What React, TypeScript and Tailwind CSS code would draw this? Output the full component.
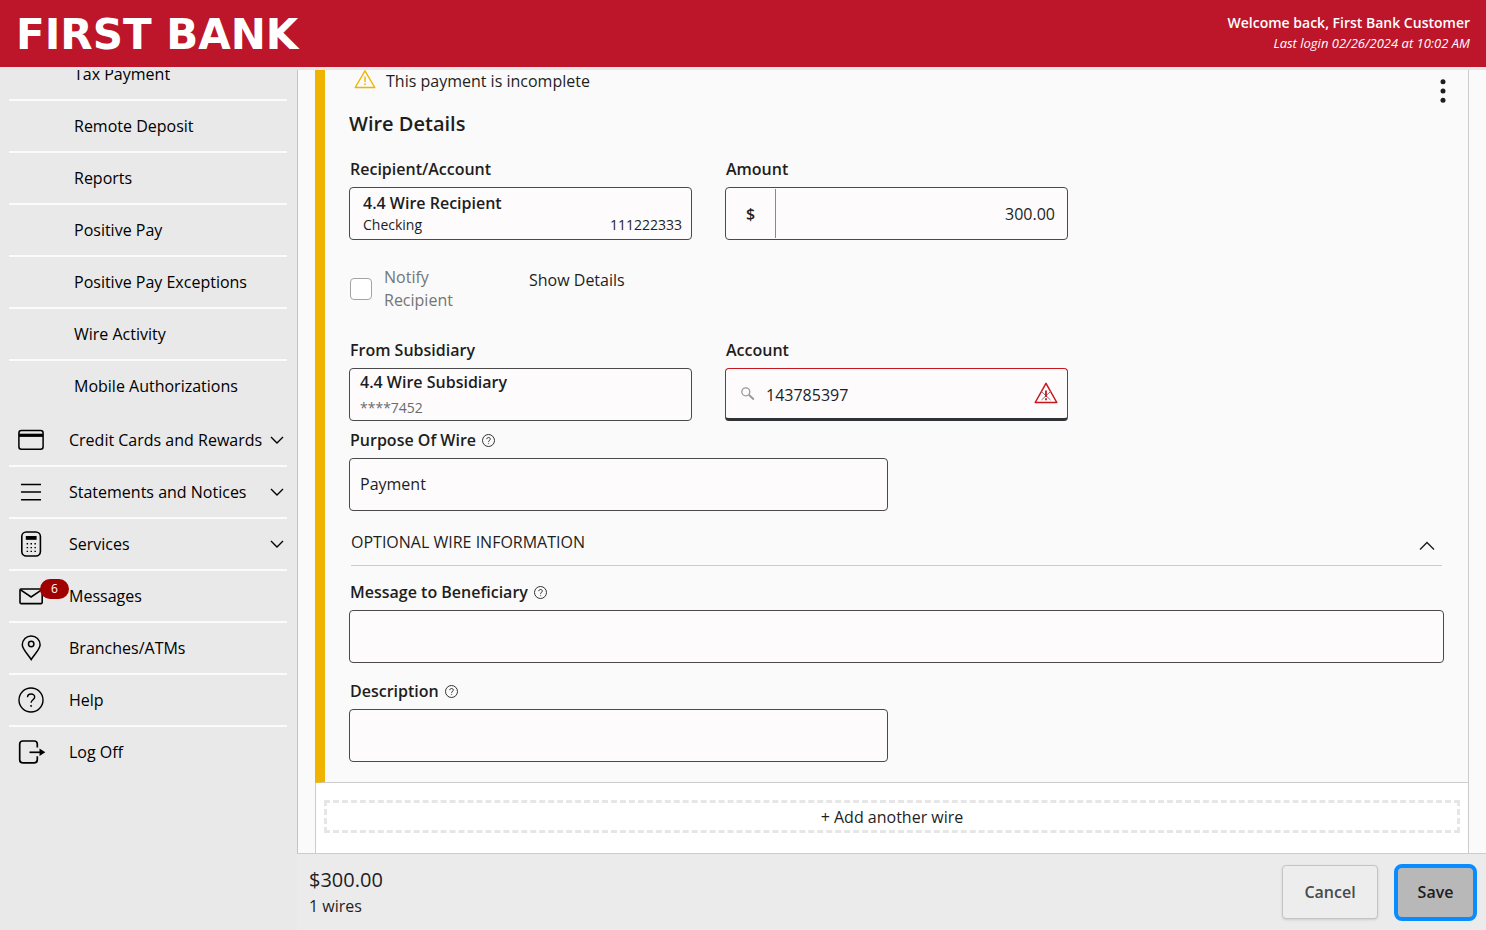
import React, { useState } from 'react';

const subItems = [
  'Tax Payment',
  'Remote Deposit',
  'Reports',
  'Positive Pay',
  'Positive Pay Exceptions',
  'Wire Activity',
  'Mobile Authorizations'
];

const CardIcon = () => (
  <svg width="26" height="26" viewBox="0 0 26 26" fill="none" stroke="currentColor" strokeWidth="1.5">
    <rect x="0.9" y="3.6" width="24.2" height="18.6" rx="2.5" />
    <path d="M1 8.3h24" strokeWidth="3.2" />
  </svg>
);

const LinesIcon = () => (
  <svg width="26" height="26" viewBox="0 0 26 26" fill="none" stroke="currentColor" strokeWidth="1.6">
    <path d="M3 5.5h20M3 13h20M3 20.7h20" />
  </svg>
);

const CalculatorIcon = () => (
  <svg width="26" height="26" viewBox="0 0 26 26" fill="none" stroke="currentColor" strokeWidth="1.6">
    <rect x="3.8" y="1" width="18.6" height="24" rx="4.5" />
    <rect x="7.8" y="5" width="10.8" height="3.8" fill="currentColor" stroke="none" />
    <path d="M8.6 12.8h10M8.6 16.6h10M8.6 20.4h10" strokeDasharray="1.5 2.4" strokeWidth="1.4" />
  </svg>
);

const MailIcon = () => (
  <svg width="26" height="26" viewBox="0 0 26 26" fill="none" stroke="currentColor" strokeWidth="1.6">
    <rect x="2" y="6" width="22.2" height="14.6" rx="1" />
    <path d="M2.6 6.8l10.500 7.200 10.500-7.200" />
  </svg>
);

const PinIcon = () => (
  <svg width="26" height="26" viewBox="0 0 26 26" fill="none" stroke="currentColor" strokeWidth="1.5">
    <path d="M13.2 24.5C10 19.5 4.3 14.2 4.3 9.8a8.9 8.9 0 0 1 17.8 0c0 4.4-5.7 9.7-8.9 14.7z" />
    <circle cx="13.2" cy="9" r="2.7" />
  </svg>
);

const HelpIcon = ({ size = 26 }: { size?: number }) => (
  <svg width={size} height={size} viewBox="0 0 26 26" fill="none" stroke="currentColor" strokeWidth={size < 20 ? 1.8 : 1.4}>
    <circle cx="13" cy="13" r="12" />
    <path d="M9.5 10.3c0-4.4 7.2-4.4 7.2-.3 0 2.7-3.6 2.8-3.6 5.8" />
    <circle cx="13.1" cy="18.9" r="0.6" fill="currentColor" strokeWidth="0.8" />
  </svg>
);

const LogOffIcon = () => (
  <svg width="28" height="26" viewBox="0 0 28 26" fill="none" stroke="currentColor" strokeWidth="1.7">
    <path d="M19.3 8.5V5a3 3 0 0 0-3-3H4.7a3 3 0 0 0-3 3v15.8a3 3 0 0 0 3 3h11.6a3 3 0 0 0 3-3v-3.5" />
    <path d="M11.5 13.3h11" />
    <path d="M21.5 9.5l5.8 3.8-5.800 3.800z" fill="currentColor" stroke="none" />
  </svg>
);

const Chevron = ({ up = false }: { up?: boolean }) => (
  <svg width="16" height="10" viewBox="0 0 16 10" fill="none" stroke="currentColor" strokeWidth="1.4">
    <path d={up ? 'M1 8.5l7-7 7 7' : 'M2 2l6 6 6-6'} />
  </svg>
);

const mainItems = [
  { label: 'Credit Cards and Rewards', icon: <CardIcon />, expandable: true },
  { label: 'Statements and Notices', icon: <LinesIcon />, expandable: true },
  { label: 'Services', icon: <CalculatorIcon />, expandable: true },
  { label: 'Messages', icon: <MailIcon />, badge: 6 },
  { label: 'Branches/ATMs', icon: <PinIcon /> },
  { label: 'Help', icon: <HelpIcon /> },
  { label: 'Log Off', icon: <LogOffIcon /> }
];

const Sidebar = () => (
  <nav className="w-[298px] shrink-0 overflow-hidden border-r border-[#c4c4c4] bg-[#e9e9e9] pl-[9px] pr-2.5 text-base text-black">
    <ul className="-mt-[21px]">
      {subItems.map((item, index) => (
        <li key={item} className={index < subItems.length - 1 ? 'border-b-2 border-[#fbfbfb]' : ''}>
          <a href="#" className="flex h-[50px] items-center pl-[65px]">{item}</a>
        </li>
      ))}
    </ul>
    <ul className="mt-1">
      {mainItems.map((item, index) => (
        <li key={item.label} className={index < mainItems.length - 1 ? 'border-b-2 border-[#fbfbfb]' : ''}>
          {item.expandable ? (
            <button type="button" className="flex h-[50px] w-full items-center pl-[9px] pr-0.5 text-left">
              <span className="w-[51px]">{item.icon}</span>
              <span className="flex-1 whitespace-nowrap">{item.label}</span>
              <Chevron />
            </button>
          ) : (
            <a href="#" className="flex h-[50px] items-center pl-[9px]">
              <span className="relative w-[51px]">
                {item.icon}
                {item.badge && (
                  <span className="absolute -top-1 left-[22px] flex h-5 w-[29px] items-center justify-center rounded-full bg-[#a00000] text-xs text-white">
                    {item.badge}
                  </span>
                )}
              </span>
              {item.label}
            </a>
          )}
        </li>
      ))}
    </ul>
  </nav>
);

const boxClass = 'h-[53px] w-full rounded border border-[#4a4a4a] bg-[#fdfbfc]';
const labelClass = 'mb-1.5 flex h-6 items-center gap-1.5 pl-px text-base font-semibold';

export default function App() {
  const [amount, setAmount] = useState('300.00');
  const [account, setAccount] = useState('143785397');
  const [purpose, setPurpose] = useState('Payment');
  const [message, setMessage] = useState('');
  const [description, setDescription] = useState('');
  const [notify, setNotify] = useState(false);
  const [showOptional, setShowOptional] = useState(true);

  return (
    <div className="flex h-screen flex-col overflow-hidden bg-[#fafafa] font-['Open_Sans',sans-serif] text-[#1e1e1e]">
      <header className="flex h-[70px] shrink-0 items-center justify-between border-b-[3px] border-[#e6e6e6] bg-[#bd1529] pl-4 pr-4 text-white">
        <div className="pt-0.5 font-['DejaVu_Sans',sans-serif] text-[42px] font-bold leading-none">FIRST BANK</div>
        <div className="pb-0.5 text-right leading-5">
          <p className="text-sm font-semibold leading-5">Welcome back, First Bank Customer</p>
          <p className="text-[13px] italic leading-5">Last login 02/26/2024 at 10:02 AM</p>
        </div>
      </header>

      <div className="flex min-h-0 flex-1">
        <Sidebar />

        <div className="flex min-w-0 flex-1 flex-col">
          <main className="flex min-h-0 flex-1 flex-col overflow-hidden px-[17px]">
            <section className="border-b border-l-[10px] border-r border-b-[#cccccc] border-l-[#f0b400] border-r-[#cccccc] px-6 pb-5">
              <div className="flex justify-between">
                <div>
                  <p className="flex h-[22px] items-center gap-2.5 pl-[5px] text-base">
                    <svg width="22" height="22" viewBox="0 0 22 22" fill="none" stroke="#f0b400" strokeWidth="1.4" strokeLinejoin="round">
                      <path d="M11 0.8L20.8 17.500H1.2z" />
                      <path d="M11 6.500v5.500M11 13.300v1.700" />
                    </svg>
                    This payment is incomplete
                  </p>
                  <h1 className="mt-5 text-xl font-semibold leading-6">Wire Details</h1>
                </div>
                <button type="button" aria-label="Wire options" className="-mr-0.5 mt-2 self-start">
                  <svg width="6" height="26" viewBox="0 0 6 26" fill="currentColor">
                    <circle cx="3" cy="3.700" r="2.500" />
                    <circle cx="3" cy="13" r="2.500" />
                    <circle cx="3" cy="22.300" r="2.500" />
                  </svg>
                </button>
              </div>

              <div className="mt-[21px] flex gap-[33px]">
                <div className="w-[343px]">
                  <label htmlFor="recipient" className={labelClass}>Recipient/Account</label>
                  <button id="recipient" type="button" className={`${boxClass} pb-0.5 pl-[13px] pr-[9px] text-left`}>
                    <span className="block text-base font-semibold leading-6">4.4 Wire Recipient</span>
                    <span className="flex justify-between text-sm leading-5">
                      <span>Checking</span>
                      <span>111222333</span>
                    </span>
                  </button>
                </div>
                <div className="w-[343px]">
                  <label htmlFor="amount" className={labelClass}>Amount</label>
                  <div className={`${boxClass} flex items-center`}>
                    <span className="flex h-[49px] w-[50px] items-center justify-center border-r border-[#8a8a8a] font-semibold">$</span>
                    <input
                      id="amount"
                      type="text"
                      value={amount}
                      onChange={e => setAmount(e.target.value)}
                      className="h-full min-w-0 flex-1 bg-transparent pr-3 text-right outline-none"
                    />
                  </div>
                </div>
              </div>

              <div className="mt-[26px] flex items-start">
                <label className="flex w-[180px] items-center gap-3 leading-[23px] text-[#757575]">
                  <input
                    type="checkbox"
                    checked={notify}
                    onChange={e => setNotify(e.target.checked)}
                    className="ml-px size-[22px] shrink-0 appearance-none rounded border border-[#a3a3a3] bg-white checked:bg-[#757575]"
                  />
                  <span className="w-20">Notify Recipient</span>
                </label>
                <button type="button" className="mt-0.5 leading-6">Show Details</button>
              </div>

              <div className="mt-[26px] flex gap-[33px]">
                <div className="w-[343px]">
                  <label htmlFor="subsidiary" className={labelClass}>From Subsidiary</label>
                  <button id="subsidiary" type="button" className={`${boxClass} px-2.5 text-left`}>
                    <span className="block text-base font-semibold leading-6">4.4 Wire Subsidiary</span>
                    <span className="block pt-0.5 text-sm leading-6 text-[#6b6b6b]">****7452</span>
                  </button>
                </div>
                <div className="w-[343px]">
                  <label htmlFor="account" className={labelClass}>Account</label>
                  <div className="flex h-[53px] items-center rounded border border-b-[3px] border-[#c8161d] border-b-[#2f3336] bg-[#fdfbfc] pl-3.5 pr-2">
                    <svg width="16" height="16" viewBox="0 0 16 16" fill="none" stroke="#9a9a9a">
                      <circle cx="5.8" cy="5.8" r="4" strokeWidth="1.3" />
                      <path d="M8.8 8.8l5 4.600" strokeWidth="2" />
                    </svg>
                    <input
                      id="account"
                      type="text"
                      value={account}
                      onChange={e => setAccount(e.target.value)}
                      className="ml-2.5 h-full min-w-0 flex-1 bg-transparent pt-0.5 outline-none"
                    />
                    <svg width="26" height="26" viewBox="0 0 26 26" fill="none" stroke="#c8161d" strokeWidth="1.5" strokeLinejoin="round">
                      <path d="M13 2.300L23.800 21.500H2.200z" />
                      <path d="M8.5 10.5l9 8.5M17.5 10.5l-9 8.5" stroke="#777777" strokeWidth="1" />
                      <path d="M13 9.5v6.5M13 17.3v2" strokeWidth="1.8" />
                    </svg>
                  </div>
                </div>
              </div>

              <div className="mt-[7px] max-w-[539px]">
                <label htmlFor="purpose" className={labelClass}>Purpose Of Wire <HelpIcon size={13} /></label>
                <input
                  id="purpose"
                  type="text"
                  value={purpose}
                  onChange={e => setPurpose(e.target.value)}
                  className={`${boxClass} px-2.5 pb-0.5`}
                />
              </div>

              <div className="mx-0.5 mt-5 border-b border-[#cccccc]">
                <button
                  type="button"
                  aria-expanded={showOptional}
                  onClick={() => setShowOptional(!showOptional)}
                  className="flex h-[34px] w-full items-center justify-between pb-3 pr-[7px]"
                >
                  OPTIONAL WIRE INFORMATION
                  <span className="pt-2"><Chevron up={showOptional} /></span>
                </button>
              </div>

              {showOptional && (
                <div className="mt-3.5">
                  <label htmlFor="message" className={labelClass}>Message to Beneficiary <HelpIcon size={13} /></label>
                  <input
                    id="message"
                    type="text"
                    value={message}
                    onChange={e => setMessage(e.target.value)}
                    className={`${boxClass} px-2.5`}
                  />
                  <div className="mt-4 max-w-[539px]">
                    <label htmlFor="description" className={labelClass}>Description <HelpIcon size={13} /></label>
                    <input
                      id="description"
                      type="text"
                      value={description}
                      onChange={e => setDescription(e.target.value)}
                      className={`${boxClass} px-2.5`}
                    />
                  </div>
                </div>
              )}
            </section>

            <div className="flex-1 border-x border-[#cccccc] bg-white px-2 pt-[17px]">
              <button type="button" className="flex h-[33px] w-full items-center justify-center border-[3px] border-dashed border-[#e6e6e6]">
                + Add another wire
              </button>
            </div>
          </main>

          <footer className="-ml-px flex h-[77px] shrink-0 items-center justify-between border-t border-[#cccccc] bg-[#ebebeb] pl-3 pr-[9px]">
            <div>
              <p className="text-xl leading-7">$300.00</p>
              <p className="leading-6">1 wires</p>
            </div>
            <div className="flex items-center gap-4">
              <button type="button" className="h-[54px] w-24 rounded border border-[#c4c4c4] bg-[#ededed] font-semibold text-[#4a4a4a] shadow">
                Cancel
              </button>
              <button type="button" className="h-[57px] w-[83px] rounded-lg border-4 border-[#0a8cff] bg-[#b8b8b8] font-semibold">
                Save
              </button>
            </div>
          </footer>
        </div>
      </div>
    </div>
  );
}
